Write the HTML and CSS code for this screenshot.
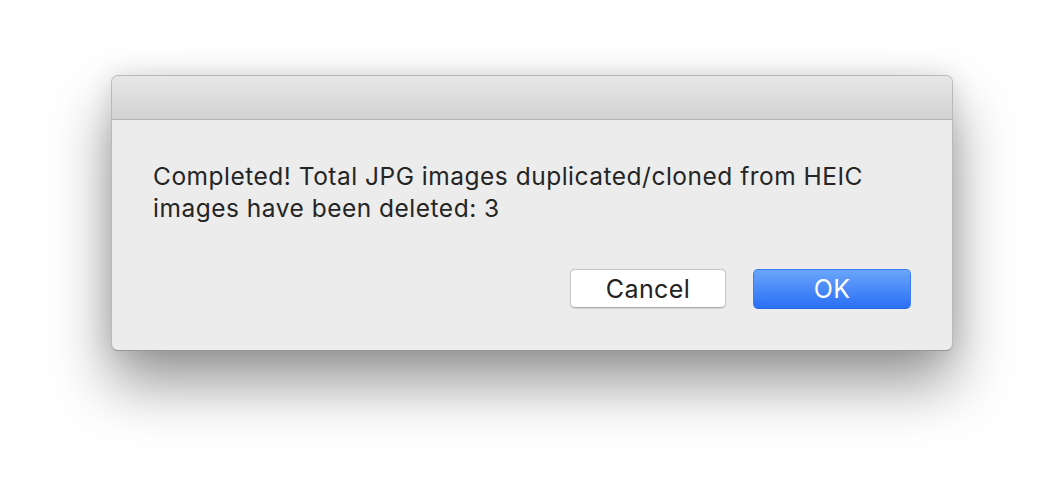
FILE: index.html
```html
<!DOCTYPE html>
<html>
<head>
<meta charset="utf-8">
<link rel="stylesheet" href="styles.css">
</head>
<body>
<div class="stage">
  <div class="dialog">
    <div class="titlebar"></div>
    <div class="content">
      <p class="message">Completed! Total JPG images duplicated/cloned from HEIC<br>images have been deleted: 3</p>
      <div class="buttons">
        <button class="btn cancel">Cancel</button>
        <button class="btn ok">OK</button>
      </div>
    </div>
  </div>
</div>
</body>
</html>
```
FILE: styles.css
```css
html, body {
  margin: 0;
  padding: 0;
  background: #ffffff;
  width: 1064px;
  height: 498px;
  overflow: hidden;
}
.stage {
  padding: 75px 0 0 111px;
}
.dialog {
  width: 842px;
  height: 276px;
  box-sizing: border-box;
  border-radius: 7px;
  background: #ececec;
  border: 1px solid #b9b9b9;
  border-bottom-color: #959595;
  box-shadow: 0 32px 60px rgba(0,0,0,0.42), 0 0 24px rgba(0,0,0,0.10);
  overflow: hidden;
  display: flex;
  flex-direction: column;
  font-family: Inter, "Liberation Sans", Arial, sans-serif;
}
.titlebar {
  height: 43px;
  background: linear-gradient(#e7e7e7, #d2d2d2);
  border-bottom: 1px solid #b3b3b3;
  flex: none;
}
.content {
  flex: 1;
  padding: 0 41px 0 41px;
  display: flex;
  flex-direction: column;
}
.message {
  margin: 40px 0 0 0;
  font-size: 24.5px;
  line-height: 32px;
  letter-spacing: 0.5px;
  color: #252525;
}
.buttons {
  margin-top: 45px;
  display: flex;
  justify-content: flex-end;
  gap: 27px;
}
.btn {
  font-family: Inter, "Liberation Sans", Arial, sans-serif;
  font-size: 25px;
  letter-spacing: 0.4px;
  border-radius: 5px;
  height: 40px;
  padding: 0;
  margin: 0;
}
.cancel {
  width: 156px;
  height: 39px;
  background: #ffffff;
  color: #222222;
  border: 1px solid #c6c6c6;
  border-bottom-color: #adadad;
  box-shadow: 0 0.5px 1px rgba(0,0,0,0.12);
}
.ok {
  width: 158px;
  background: linear-gradient(#6aa6fb, #2a6ef4);
  color: #ffffff;
  border: 1px solid #3d7ff3;
  border-bottom-color: #2c66e0;
}
```
